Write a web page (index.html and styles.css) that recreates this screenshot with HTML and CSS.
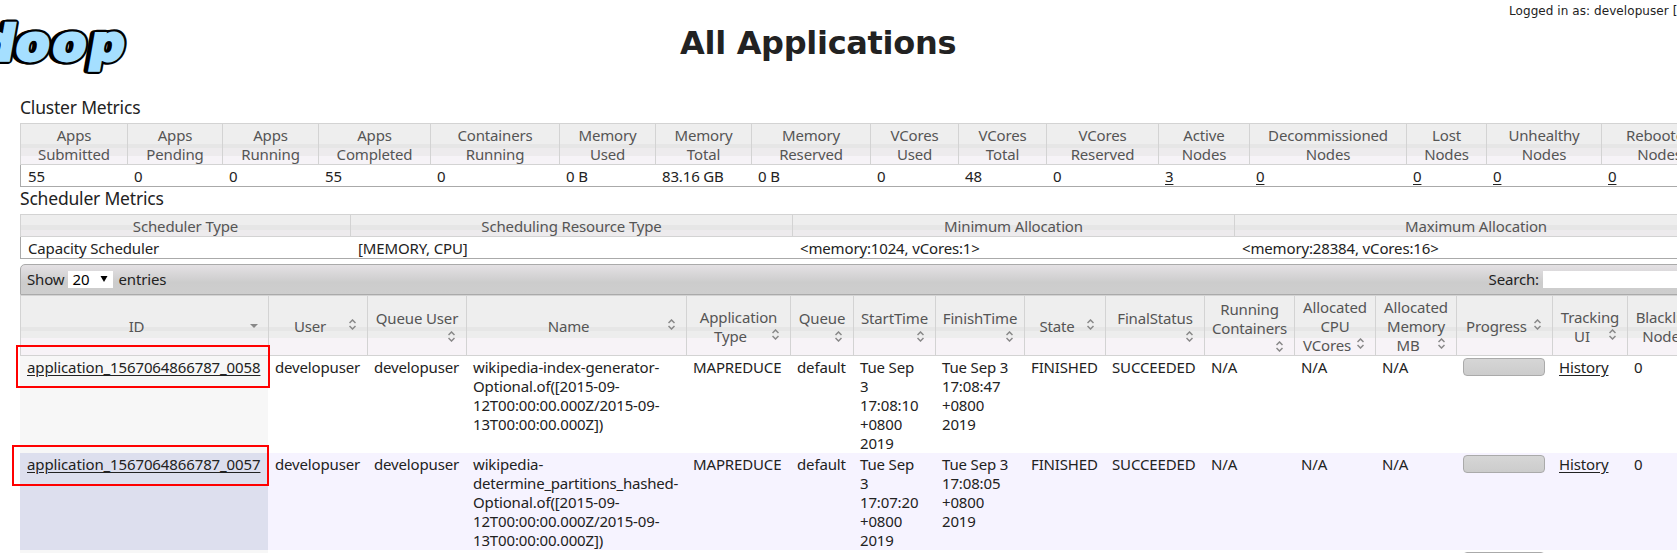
FILE: index.html
```
<!DOCTYPE html>
<html lang="en">
<head>
<meta charset="utf-8">
<title>All Applications</title>
<link rel="stylesheet" href="styles.css">
</head>
<body>
<svg class="defs" width="0" height="0" aria-hidden="true">
  <symbol id="sort" viewBox="0 0 7 11"><path d="M.5 4 3.5 1 6.5 4M.5 7 3.5 10 6.5 7" fill="none" stroke="#888" stroke-width="1.5"/></symbol>
  <symbol id="desc" viewBox="0 0 8 4"><path d="M0 0H8L4 4Z" fill="#888"/></symbol>
</svg>
<header class="top">
  <svg class="logo" width="130" height="80" viewBox="0 0 130 80" role="img" aria-label="hadoop">
    <g transform="translate(12 59.5) skewX(-10)" class="logo-text">
      <text class="logo-back" x="-1" y="0" textLength="108">oop</text>
      <text class="logo-back" x="-37" y="0">d</text>
      <text class="logo-edge" x="2" y="0" textLength="108">oop</text>
      <text class="logo-edge" x="-34" y="0">d</text>
      <text class="logo-face" x="2" y="0" textLength="108">oop</text>
      <text class="logo-face" x="-34" y="0">d</text>
    </g>
  </svg>
  <h1>All Applications</h1>
  <div class="login">Logged in as: developuser [</div>
</header>
<main>
  <h3>Cluster Metrics</h3>
  <section class="metrics cluster">
    <div class="row head">
      <div>Apps<br>Submitted</div><div>Apps<br>Pending</div><div>Apps<br>Running</div><div>Apps<br>Completed</div><div>Containers<br>Running</div><div>Memory<br>Used</div><div>Memory<br>Total</div><div>Memory<br>Reserved</div><div>VCores<br>Used</div><div>VCores<br>Total</div><div>VCores<br>Reserved</div><div>Active<br>Nodes</div><div>Decommissioned<br>Nodes</div><div>Lost<br>Nodes</div><div>Unhealthy<br>Nodes</div><div>Rebooted<br>Nodes</div>
    </div>
    <div class="row vals">
      <div>55</div><div>0</div><div>0</div><div>55</div><div>0</div><div>0 B</div><div>83.16 GB</div><div>0 B</div><div>0</div><div>48</div><div>0</div><div><a>3</a></div><div><a>0</a></div><div><a>0</a></div><div><a>0</a></div><div><a>0</a></div>
    </div>
  </section>
  <h3>Scheduler Metrics</h3>
  <section class="metrics scheduler">
    <div class="row head"><div>Scheduler Type</div><div>Scheduling Resource Type</div><div>Minimum Allocation</div><div>Maximum Allocation</div></div>
    <div class="row vals"><div>Capacity Scheduler</div><div>[MEMORY, CPU]</div><div>&lt;memory:1024, vCores:1&gt;</div><div>&lt;memory:28384, vCores:16&gt;</div></div>
  </section>
  <section class="apps">
    <div class="toolbar">
      <span>Show</span>
      <span class="select"><span>20</span><svg width="8" height="6" viewBox="0 0 8 6"><path d="M.5 0H7.5L4 6Z"/></svg></span>
      <span>entries</span>
      <span class="search">Search:</span><span class="input"></span>
    </div>
    <div class="row head">
      <div><p class="last"><span>ID</span><svg class="d"><use href="#desc"/></svg></p></div>
      <div><p class="last"><span>User</span><svg><use href="#sort"/></svg></p></div>
      <div><p>Queue User</p><p class="wrap"><svg><use href="#sort"/></svg></p></div>
      <div><p class="last"><span>Name</span><svg><use href="#sort"/></svg></p></div>
      <div><p>Application</p><p class="last"><span>Type</span><svg><use href="#sort"/></svg></p></div>
      <div><p>Queue</p><p class="wrap"><svg><use href="#sort"/></svg></p></div>
      <div><p>StartTime</p><p class="wrap"><svg><use href="#sort"/></svg></p></div>
      <div><p>FinishTime</p><p class="wrap"><svg><use href="#sort"/></svg></p></div>
      <div><p class="last"><span>State</span><svg><use href="#sort"/></svg></p></div>
      <div><p>FinalStatus</p><p class="wrap"><svg><use href="#sort"/></svg></p></div>
      <div><p>Running</p><p>Containers</p><p class="wrap"><svg><use href="#sort"/></svg></p></div>
      <div><p>Allocated</p><p>CPU</p><p class="last"><span>VCores</span><svg><use href="#sort"/></svg></p></div>
      <div><p>Allocated</p><p>Memory</p><p class="last"><span>MB</span><svg><use href="#sort"/></svg></p></div>
      <div><p class="last"><span>Progress</span><svg><use href="#sort"/></svg></p></div>
      <div><p>Tracking</p><p class="last"><span>UI</span><svg><use href="#sort"/></svg></p></div>
      <div><p>Blacklisted</p><p class="last"><span>Nodes</span><svg><use href="#sort"/></svg></p></div>
    </div>
    <div class="row app odd">
      <div><a class="id">application_1567064866787_0058</a></div><div>developuser</div><div>developuser</div>
      <div class="name">wikipedia-index-generator-<br>Optional.of([2015-09-<br>12T00:00:00.000Z/2015-09-<br>13T00:00:00.000Z])</div>
      <div>MAPREDUCE</div><div>default</div><div>Tue Sep<br>3<br>17:08:10<br>+0800<br>2019</div><div>Tue Sep 3<br>17:08:47<br>+0800<br>2019</div>
      <div>FINISHED</div><div>SUCCEEDED</div><div>N/A</div><div>N/A</div><div>N/A</div><div><i class="bar"></i></div><div><a>History</a></div><div>0</div>
    </div>
    <div class="row app even">
      <div><a class="id">application_1567064866787_0057</a></div><div>developuser</div><div>developuser</div>
      <div class="name">wikipedia-<br><span class="tight">determine_partitions_hashed-</span><br>Optional.of([2015-09-<br>12T00:00:00.000Z/2015-09-<br>13T00:00:00.000Z])</div>
      <div>MAPREDUCE</div><div>default</div><div>Tue Sep<br>3<br>17:07:20<br>+0800<br>2019</div><div>Tue Sep 3<br>17:08:05<br>+0800<br>2019</div>
      <div>FINISHED</div><div>SUCCEEDED</div><div>N/A</div><div>N/A</div><div>N/A</div><div><i class="bar"></i></div><div><a>History</a></div><div>0</div>
    </div>
    <div class="row app odd">
      <div></div><div></div><div></div><div></div><div></div><div></div><div></div><div></div><div></div><div></div><div></div><div></div><div></div><div><i class="bar"></i></div><div></div><div></div>
    </div>
  </section>
</main>
<div class="mark mark-one"></div>
<div class="mark mark-two"></div>
</body>
</html>
```
FILE: styles.css
```
* { box-sizing: border-box; }
html { height: 553px; overflow: hidden; }
body {
  position: relative;
  margin: 0;
  width: 1677px;
  height: 553px;
  overflow: hidden;
  background: #fff;
  color: #222;
  font: 15px/19px "Noto Sans", "Open Sans", sans-serif;
  letter-spacing: -0.15px;
  white-space: nowrap;
}
.defs { position: absolute; }
a { text-decoration: underline; text-underline-offset: 2px; }

.top {
  display: grid;
  grid-template-columns: 680px 829px 168px;
  height: 95px;
  overflow: hidden;
}
.logo { display: block; }
.logo-text { font: bold 48px "DejaVu Sans", sans-serif; letter-spacing: 0; }
.logo-back, .logo-edge { fill: #000; stroke: #000; stroke-linejoin: round; }
.logo-back { stroke-width: 7px; }
.logo-edge { stroke-width: 8px; }
.logo-face { fill: #a5dfff; stroke: #a5dfff; stroke-width: 3.5px; }
h1 {
  margin: 24px 0 0;
  font: bold 32px/38px "DejaVu Sans", sans-serif;
  letter-spacing: -0.3px;
}
.login {
  padding-top: 4px;
  font: 12px/15px "DejaVu Sans", sans-serif;
  letter-spacing: 0.07px;
}

main { width: 1697px; height: 458px; padding-left: 20px; overflow: hidden; }
h3 {
  height: 28px;
  margin: 0;
  font-size: 17.5px;
  font-weight: normal;
  line-height: 24px;
  letter-spacing: -0.2px;
}
.cluster + h3 { height: 27px; line-height: 22px; }
.row { display: grid; }
.cluster .row { grid-template-columns: 107px 95px 96px 112px 129px 96px 96px 119px 88px 88px 112px 91px 157px 80px 115px 116px; }
.scheduler .row { grid-template-columns: 330px 442px 442px 483px; }
.apps .row { grid-template-columns: 248px 99px 99px 220px 104px 63px 82px 89px 81px 99px 90px 81px 81px 96px 75px 90px; }

.head { color: #555; text-align: center; }
.head > div {
  border: 1px solid #d3d3d3;
  border-right: 0;
  background: linear-gradient(#eee 50%, #e6e6e6 50%, #e6e6e6 60%, #edebed 60%, #edebed 80%, #f6f3f7 80%);
}
.metrics .head > div { padding: 2px 4px 0; }
.cluster .head { height: 42px; }
.scheduler .head { height: 23px; }
.scheduler .head > div { background: linear-gradient(#eee 50%, #e6e6e6 50%, #e6e6e6 70%, #edebed 70%); }
.vals {
  height: 22px;
  padding-top: 2px;
  border: solid #aaa;
  border-width: 0 0 1px 1px;
}
.vals > div { padding-left: 8px; margin-left: -1px; }
.cluster .vals > div + div { padding-left: 7px; }

.apps { margin-top: 5px; }
.toolbar {
  display: flex;
  align-items: center;
  height: 31px;
  padding: 0 0 1px 6px;
  border: 1px solid #aaa;
  border-radius: 5px 0 0 0;
  background: linear-gradient(#e4e1e4, #ccc 60%, #cecece);
}
.select {
  display: flex;
  align-items: center;
  justify-content: space-between;
  width: 45px;
  height: 17px;
  margin: 0 5px 0 4px;
  padding: 0 5px 0 4px;
  background: #fff;
  color: #000;
}
.search { margin-left: auto; }
.input { width: 153px; height: 17px; margin-left: 4px; background: #fff; }

.apps .head { height: 61px; }
.apps .head > div {
  display: flex;
  flex-direction: column;
  justify-content: center;
  padding: 2px 6px 0;
  background: linear-gradient(#eee 31px, #e6e6e6 31px, #e6e6e6 35px, #ededed 35px, #ededed 42px, #f7f3f7 42px);
}
p { display: flex; justify-content: center; height: 19px; margin: 0; }
.last span { flex: 1; }
.last svg { align-self: center; margin: -4px 5px 0 4px; }
p svg { flex: none; width: 7px; height: 11px; }
p svg.d { width: 8px; height: 4px; margin: -2px 4px 0; }
.wrap { height: 16px; justify-content: flex-end; padding: 3px 5px 0 0; }

.app { height: 97px; }
.app > div { padding: 2px 0 0 7px; }
.id { letter-spacing: -0.12px; }
.tight { letter-spacing: -0.22px; }
.odd > div:first-child { background: #f7f7f7; }
.even { background: #f6f3ff; }
.even > div:first-child { background: #dddfee; }
.bar {
  display: block;
  width: 82px;
  height: 18px;
  border: 1px solid #aaa;
  border-radius: 4px;
  background: linear-gradient(#d6d6d6, #ccc);
}

.mark { position: absolute; border: 2px solid #f00; }
.mark-one { left: 16px; top: 345px; width: 254px; height: 43px; }
.mark-two { left: 12px; top: 445px; width: 257px; height: 41px; }
```
